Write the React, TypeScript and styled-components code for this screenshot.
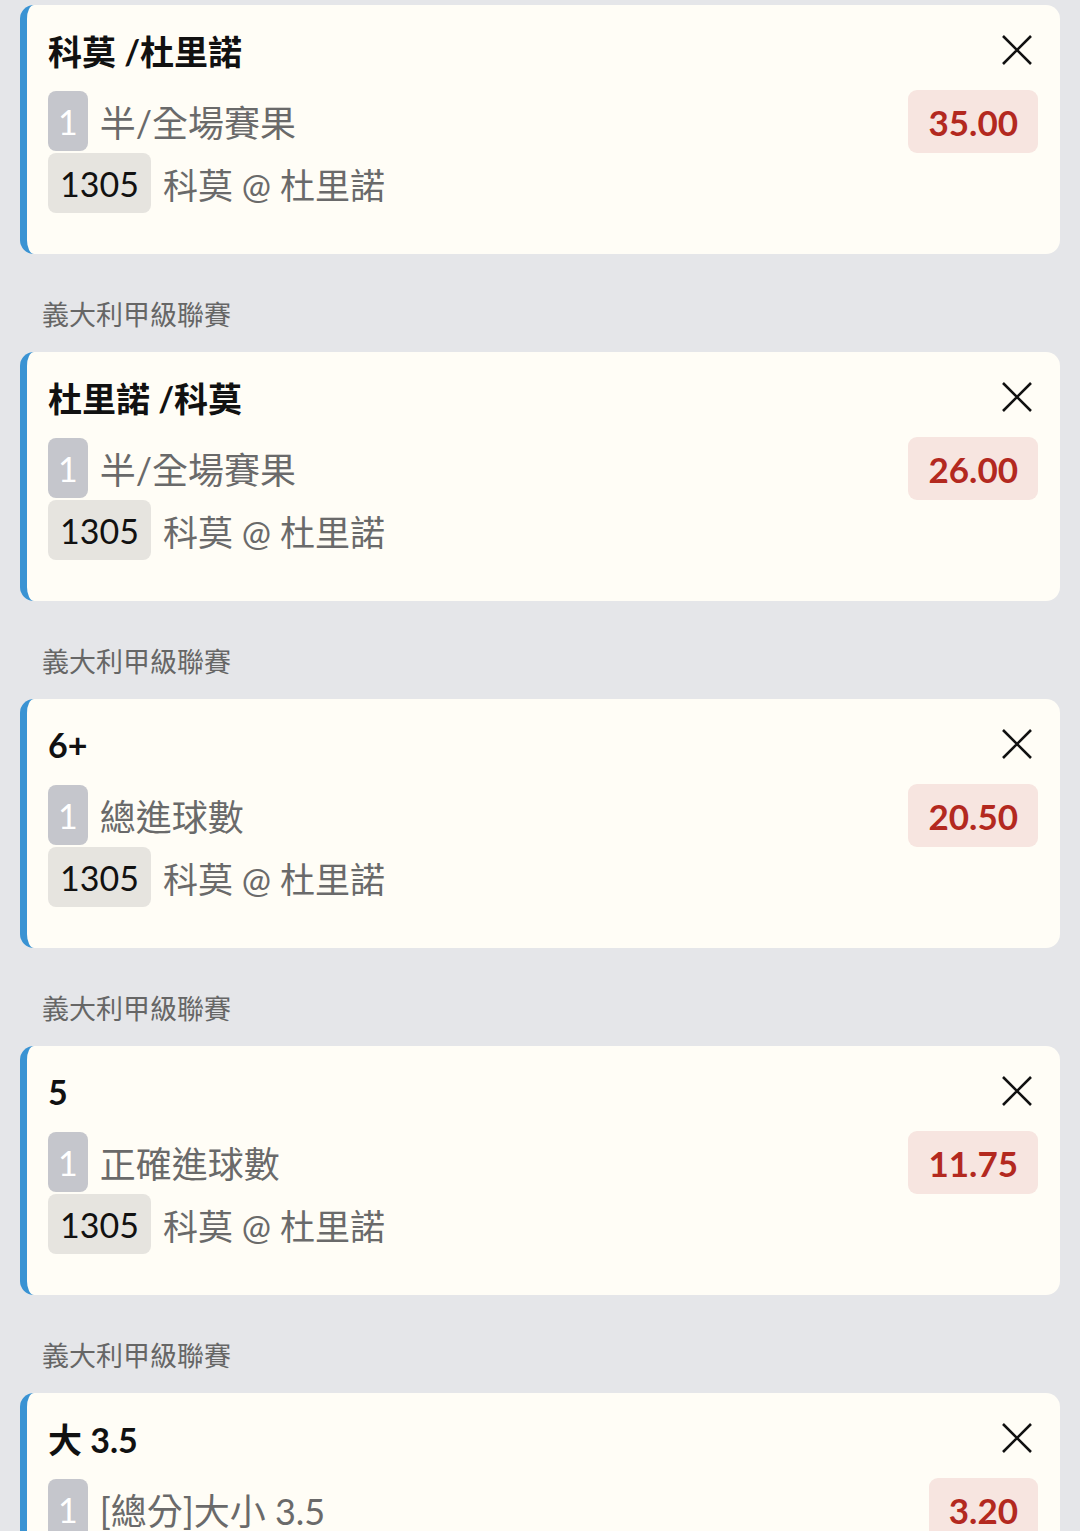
import styled, { createGlobalStyle } from "styled-components";

const GlobalStyle = createGlobalStyle`
  body {
    margin: 0;
    background: #e5e6e9;
    font-family: Lato, "Noto Sans CJK TC", sans-serif;
  }
`;

const Page = styled.div`
  padding: 5px 20px 0;
  display: flex;
  flex-direction: column;
`;

const League = styled.div`
  margin: 41px 0 17px 22px;
  line-height: 40px;
  font-size: 27px;
  color: #666666;
`;

const Card = styled.div`
  background: #fffdf6;
  border-left: 7px solid #3a93d3;
  border-radius: 14px;
  padding: 25px 22px 41px 21px;
  height: 249px;
  box-sizing: border-box;
`;

const TitleRow = styled.div`
  display: flex;
  align-items: center;
  justify-content: space-between;
  height: 40px;
  margin-bottom: 21px;
`;

const Title = styled.div`
  font-size: 34px;
  font-weight: 700;
  color: #111111;
`;

const CloseButton = styled.button`
  border: 0;
  background: none;
  padding: 0;
  margin-right: 4px;
  width: 34px;
  height: 34px;
  display: flex;
  align-items: center;
  justify-content: center;
  cursor: pointer;
`;

const Body = styled.div`
  display: flex;
  justify-content: space-between;
  align-items: flex-start;
`;

const Rows = styled.div`
  display: flex;
  flex-direction: column;
  gap: 2px;
`;

const Row = styled.div<{ $size: number }>`
  display: flex;
  align-items: center;
  gap: 12px;
  font-size: ${(p) => p.$size}px;
  color: #6a6a6a;
`;

const Tag = styled.span<{ $muted?: boolean }>`
  display: inline-flex;
  align-items: center;
  justify-content: center;
  height: 60px;
  padding: 0 ${(p) => (p.$muted ? "10px" : "12px")};
  border-radius: 8px;
  background: ${(p) => (p.$muted ? "#c5c6cc" : "#e6e4df")};
  color: ${(p) => (p.$muted ? "#ffffff" : "#111111")};
  font-size: 34px;
`;

const Odds = styled.div`
  height: 63px;
  margin-top: -1px;
  padding: 0 20px;
  border-radius: 9px;
  background: #f7e5e0;
  color: #b3291f;
  font-size: 35px;
  font-weight: 700;
  display: flex;
  align-items: center;
`;

type Bet = {
  title: string;
  market: string;
  odds: string;
};

const bets: Bet[] = [
  { title: "科莫 /杜里諾", market: "半/全場賽果", odds: "35.00" },
  { title: "杜里諾 /科莫", market: "半/全場賽果", odds: "26.00" },
  { title: "6+", market: "總進球數", odds: "20.50" },
  { title: "5", market: "正確進球數", odds: "11.75" },
  { title: "大 3.5", market: "[總分]大小 3.5", odds: "3.20" },
];

function CloseIcon() {
  return (
    <svg width="32" height="32" viewBox="0 0 32 32">
      <path d="M2 2 L30 30 M30 2 L2 30" stroke="#111" strokeWidth="2.6" fill="none" />
    </svg>
  );
}

function BetCard({ bet }: { bet: Bet }) {
  return (
    <Card>
      <TitleRow>
        <Title>{bet.title}</Title>
        <CloseButton>
          <CloseIcon />
        </CloseButton>
      </TitleRow>
      <Body>
        <Rows>
          <Row $size={36}>
            <Tag $muted>1</Tag>
            {bet.market}
          </Row>
          <Row $size={35}>
            <Tag>1305</Tag>
            科莫 @ 杜里諾
          </Row>
        </Rows>
        <Odds>{bet.odds}</Odds>
      </Body>
    </Card>
  );
}

export default function App() {
  return (
    <>
      <GlobalStyle />
      <Page>
        {bets.map((bet, i) => (
          <div key={i}>
            {i > 0 && <League>義大利甲級聯賽</League>}
            <BetCard bet={bet} />
          </div>
        ))}
      </Page>
    </>
  );
}
